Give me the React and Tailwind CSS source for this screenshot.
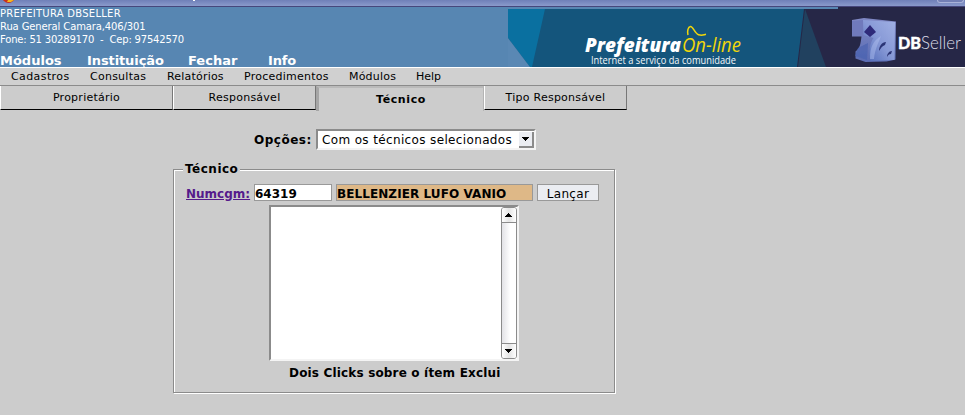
import React from "react";

const mainMenu = [
  ["Módulos", "w-[87px]"],
  ["Instituição", "w-[101px] tracking-[-0.1px]"],
  ["Fechar", "w-[80px]"],
  ["Info", "w-[60px] tracking-[-0.2px]"],
];

const subMenu = [
  ["Cadastros", "w-[79px] tracking-[0.4px]"],
  ["Consultas", "w-[77px] tracking-[0.25px]"],
  ["Relatórios", "w-[77px] tracking-[0.2px]"],
  ["Procedimentos", "w-[105px] tracking-[0.25px]"],
  ["Módulos", "w-[67px] tracking-[0.2px]"],
  ["Help", "w-[40px]"],
];

function TitleBar() {
  return (
    <div className="flex h-[7px] items-start justify-between overflow-hidden border-b border-[#46477c] bg-linear-to-b from-[#6f80b8] to-[#8a9acb]">
      <svg width="220" height="6" viewBox="0 0 220 6">
        <circle cx="8.500" cy="-3.500" r="6.500" fill="#c9301a" />
        <path d="M8 0h6l-3 2H7z" fill="#f5b81d" />
        <path d="M193 0h2v1h-2z" fill="#fff" />
      </svg>
      <div className="mr-px h-[3px] w-[27px] rounded-b-sm border border-t-0 border-[#a9b3d8] bg-[#7380b5]" />
    </div>
  );
}

function Banner() {
  return (
    <svg width="457" height="60" viewBox="508 7 457 60" className="shrink-0">
      <defs>
        <linearGradient id="cube" x1="0" y1="1" x2="1" y2="0">
          <stop offset="0" stopColor="#4a66b6" />
          <stop offset=".5" stopColor="#8799d6" />
          <stop offset="1" stopColor="#a0b0e4" />
        </linearGradient>
        <linearGradient id="side" x1="0" y1="0" x2="0" y2="1">
          <stop offset="0" stopColor="#8088c4" />
          <stop offset="1" stopColor="#5a6cb4" />
        </linearGradient>
        <filter id="soft"><feGaussianBlur stdDeviation=".6" /></filter>
      </defs>
      <path d="M508 9h300v58H508z" fill="#14557c" />
      <path d="M508 9h37l-13 58h-2l-22-29z" fill="#0a70a0" />
      <path d="M508 38l22 29h-22z" fill="#5a88b4" />
      <path d="M804 9h34V7h127v60H797z" fill="#262747" />
      <path d="M805 9l21 58h-28z" fill="#21415f" />
      <text x="585" y="52" textLength="96" lengthAdjust="spacingAndGlyphs" fill="#fff" fontFamily="Open Sans, sans-serif" fontSize="20" fontWeight="800" fontStyle="italic">Prefeitura</text>
      <text x="682" y="52" textLength="59" lengthAdjust="spacingAndGlyphs" fill="#f1d60b" fontFamily="Open Sans, sans-serif" fontSize="20" fontStyle="italic">On-line</text>
      <path d="M688 35c-1-4 0-8 2.500-8.500s4 7 8 8.200 5 0 7.500-.5" fill="none" stroke="#f1d60b" strokeWidth="1.500" />
      <text x="591" y="63.500" textLength="145" lengthAdjust="spacingAndGlyphs" fill="#f4f8fa" fontFamily="Open Sans, sans-serif" fontSize="10.500">Internet a serviço da comunidade</text>
      <g filter="url(#soft)">
        <path d="M852 20l12-2 32 3.500-.5 38-9 2-21 .5-10-3.500v-7c5-4 5-8 6-15H852z" fill="url(#side)" />
        <path d="M863 20l32 2-.5 38-24 1c-2-9-1-17 3-23l-10-3z" fill="url(#cube)" />
        <path d="M852 21l11-1v16h-10.500z" fill="#6f7abc" />
        <path d="M870 25l6 7-6 5-6-5z" fill="#2f2979" />
        <path d="M858 48l10-5-1 17-12-4z" fill="#4a63b0" opacity=".7" />
        <path d="M870 59c0-12 3-18 11-23-3 8-6 13-7 23z" fill="#b4c3f1" opacity=".45" />
        <path d="M879 51c0-5 3-9 7-9l-1 3c-3 1-4 3-6 6z" fill="#2c3475" />
        <path d="M887 57c0-3 2-6 5-6l-1 3c-2 0-3 1-4 3z" fill="#2c3475" />
      </g>
      <text x="898" y="48.500" textLength="23" lengthAdjust="spacingAndGlyphs" fill="#fff" stroke="#fff" strokeWidth=".4" fontFamily="Lato, sans-serif" fontSize="17" fontWeight="900">DB</text>
      <text x="921" y="48.500" textLength="40" lengthAdjust="spacingAndGlyphs" fill="#dddde8" fontFamily="Lato, sans-serif" fontSize="17" fontWeight="300">Seller</text>
    </svg>
  );
}

function Tabs() {
  const tab = "h-6 border-b border-b-black border-r border-r-[#777] border-l border-l-white text-center leading-[23px] tracking-[0.25px]";
  return (
    <div className="flex h-[25px] items-start text-[11px]">
      <div className={`${tab} w-[173px]`}>Proprietário</div>
      <div className={`${tab} w-[143px]`}>Responsável</div>
      <div className="h-[25px] w-[168px] border-t-2 border-r border-l-3 border-t-[#bababa] border-r-[#b4b4b4] border-l-[#a5a5a5] text-center font-bold leading-[23px] tracking-[0.6px]">Técnico</div>
      <div className={`${tab} w-[143px]`}>Tipo Responsável</div>
    </div>
  );
}

function Arrow({ up = false }) {
  return (
    <svg width="7" height="4" viewBox="0 0 7 4" shapeRendering="crispEdges">
      <path d={up ? "M3 0h1v1h1v1h1v1h1v1H0V3h1V2h1V1h1z" : "M0 0h7v1H6v1H5v1H4v1H3V3H2V2H1V1H0z"} />
    </svg>
  );
}

function ListBox() {
  const button = "flex h-[15px] items-center justify-center bg-linear-to-r from-white via-[#e4e4e4] to-white";
  return (
    <div className="ml-[95px] mt-1 flex h-[156px] w-[250px] justify-end border-2 border-t-[#8b8b8b] border-r-[#f4f4f4] border-b-[#f4f4f4] border-l-[#8b8b8b] bg-white">
      <div className="flex h-[152px] w-4 flex-col justify-between rounded-[3px] border border-[#8b8b8b] bg-linear-to-r from-[#e2e2e6] to-white to-60%">
        <div className={`${button} rounded-t-[2px] border-b border-[#8b8b8b] pr-px`}><Arrow up /></div>
        <div className={`${button} rounded-b-[2px] border-t border-[#8b8b8b] pr-px`}><Arrow /></div>
      </div>
    </div>
  );
}

export default function App() {
  return (
    <div className="h-[415px] w-[965px] overflow-hidden bg-[#ccc] font-['DejaVu_Sans',sans-serif] text-black">
      <TitleBar />
      <header className="flex h-[60px] justify-between bg-[#5786b2] text-white">
        <div className="flex flex-col whitespace-nowrap">
          <div className="h-[47px] shrink-0 text-[10px] leading-[13px]">
            <p className="tracking-[0.27px]">PREFEITURA DBSELLER</p>
            <p className="tracking-[-0.12px]">Rua General Camara,406/301</p>
            <p className="tracking-[-0.19px]">Fone: 51 30289170 &nbsp;-&nbsp; Cep: 97542570</p>
          </div>
          <nav className="flex text-[13px] font-bold leading-[14px]">
            {mainMenu.map(([label, style]) => <span key={label} className={style}>{label}</span>)}
          </nav>
        </div>
        <Banner />
      </header>
      <nav className="flex h-[19px] border-t border-b border-t-white border-b-[#8b8b8b] bg-[#d0d0d0] pl-[11px] text-[11px] leading-[17px]">
        {subMenu.map(([label, style]) => <span key={label} className={style}>{label}</span>)}
      </nav>
      <Tabs />
      <main className="pt-[18px] text-[12px]">
        <div className="ml-[254px] flex h-[21px] items-center">
          <label className="w-[62px] font-bold tracking-[0.5px]">Opções:</label>
          <div className="flex h-[21px] w-[220px] items-center justify-between border-2 border-t-[#8b8b8b] border-r-[#f4f4f4] border-b-[#f4f4f4] border-l-[#8b8b8b] bg-white pl-1">
            <span className="whitespace-nowrap tracking-[0.36px]">Com os técnicos selecionados</span>
            <div className="flex h-4 w-[15px] shrink-0 items-center justify-center border-r-2 border-b-2 border-[#8b8b8b] bg-[#ebedf2]"><Arrow /></div>
          </div>
        </div>
        <fieldset className="ml-[173px] mt-[11px] h-[232px] w-[442px] border border-[#8b8b8b] shadow-[1px_1px_0_#fff,inset_1px_1px_0_#fff]">
          <legend className="ml-[9px] bg-[#ccc] px-[2px] font-bold leading-4 tracking-[0.5px]">Técnico</legend>
          <div className="ml-3 mt-[7px] flex h-[17px] items-center">
            <a className="w-[68px] pt-[2px] font-bold text-[#551a8b] underline">Numcgm:</a>
            <div className="h-[17px] w-[78px] border border-[#999] bg-white font-bold leading-[18px]">64319</div>
            <div className="ml-1 h-[17px] w-[197px] whitespace-nowrap border border-[#999] bg-[#deb887] font-bold leading-[18px] tracking-[0.08px]">BELLENZIER LUFO VANIO</div>
            <button className="ml-1 h-[17px] w-[62px] border border-[#999] bg-[#ebedf2] leading-[18px] tracking-[0.35px]">Lançar</button>
          </div>
          <ListBox />
          <p className="ml-[115px] mt-1 font-bold leading-4 tracking-[0.17px]">Dois Clicks sobre o ítem Exclui</p>
        </fieldset>
      </main>
    </div>
  );
}
